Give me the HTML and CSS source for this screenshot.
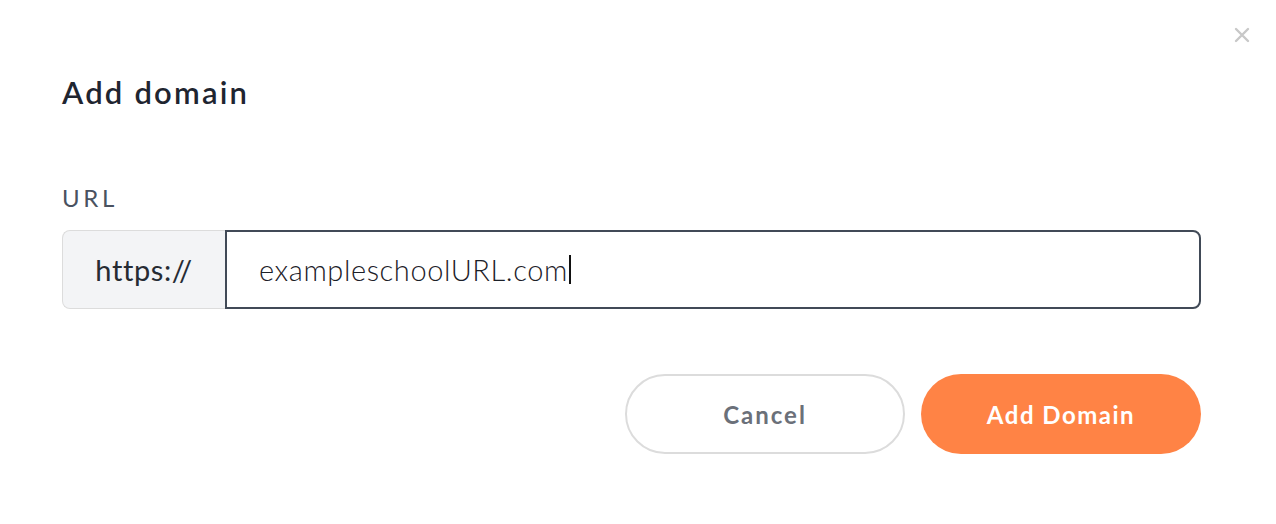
FILE: index.html
```html
<!DOCTYPE html>
<html>
<head>
<meta charset="utf-8">
<link rel="stylesheet" href="styles.css">
</head>
<body>
<div class="modal">
  <button class="close" aria-label="Close">
    <svg width="16" height="16" viewBox="0 0 16 16"><path d="M2 2L14 14M14 2L2 14" stroke="#c8c8c8" stroke-width="2.4" stroke-linecap="round"/></svg>
  </button>
  <h1 class="title">Add domain</h1>
  <label class="label">URL</label>
  <div class="input-group">
    <span class="prefix">https://</span>
    <div class="field">exampleschoolURL.com<span class="caret"></span></div>
  </div>
  <div class="actions">
    <button class="btn btn-cancel">Cancel</button>
    <button class="btn btn-primary">Add Domain</button>
  </div>
</div>
</body>
</html>
```

FILE: styles.css
```css
* { box-sizing: border-box; }
html, body { margin: 0; padding: 0; background: #fff; }
body { font-family: Lato, "Noto Sans", sans-serif; }
.modal {
  position: relative;
  width: 1276px;
  height: 524px;
  padding: 71px 75px 0 62px;
}
.close {
  position: absolute;
  top: 27px;
  right: 26px;
  width: 16px;
  height: 16px;
  padding: 0;
  border: 0;
  background: none;
  display: flex;
}
.title {
  margin: 0;
  font-size: 31px;
  line-height: 42px;
  font-weight: 600;
  color: #1f2530;
  letter-spacing: 2.2px;
}
.label {
  display: block;
  margin-top: 70px;
  font-size: 24px;
  line-height: 30px;
  color: #4a5260;
  letter-spacing: 3.6px;
}
.input-group {
  display: flex;
  margin-top: 17px;
  height: 79px;
}
.prefix {
  width: 163px;
  display: flex;
  align-items: center;
  justify-content: center;
  background: #f3f4f6;
  border: 1.5px solid #dcdcdc;
  border-right: 0;
  border-radius: 8px 0 0 8px;
  font-size: 29px;
  letter-spacing: 0.6px;
  color: #262b33;
}
.field {
  flex: 1;
  display: flex;
  align-items: center;
  border: 2px solid #414a57;
  border-radius: 0 8px 8px 0;
  padding-left: 32px;
  font-size: 29px;
  font-weight: 300;
  letter-spacing: 0.6px;
  color: #1c2028;
}
.caret {
  display: inline-block;
  width: 2px;
  height: 29px;
  background: #111;
  margin-left: 1px;
}
.actions {
  display: flex;
  justify-content: flex-end;
  gap: 16px;
  margin-top: 65px;
}
.btn {
  width: 280px;
  height: 80px;
  border-radius: 40px;
  font-family: Lato, "Noto Sans", sans-serif;
  font-size: 24px;
  font-weight: 700;
  cursor: pointer;
}
.btn-cancel {
  background: #fff;
  border: 2px solid #dcdcdc;
  color: #6b7079;
  letter-spacing: 2px;
}
.btn-primary {
  background: #ff8345;
  border: 0;
  color: #fff;
  letter-spacing: 1.5px;
}
```
